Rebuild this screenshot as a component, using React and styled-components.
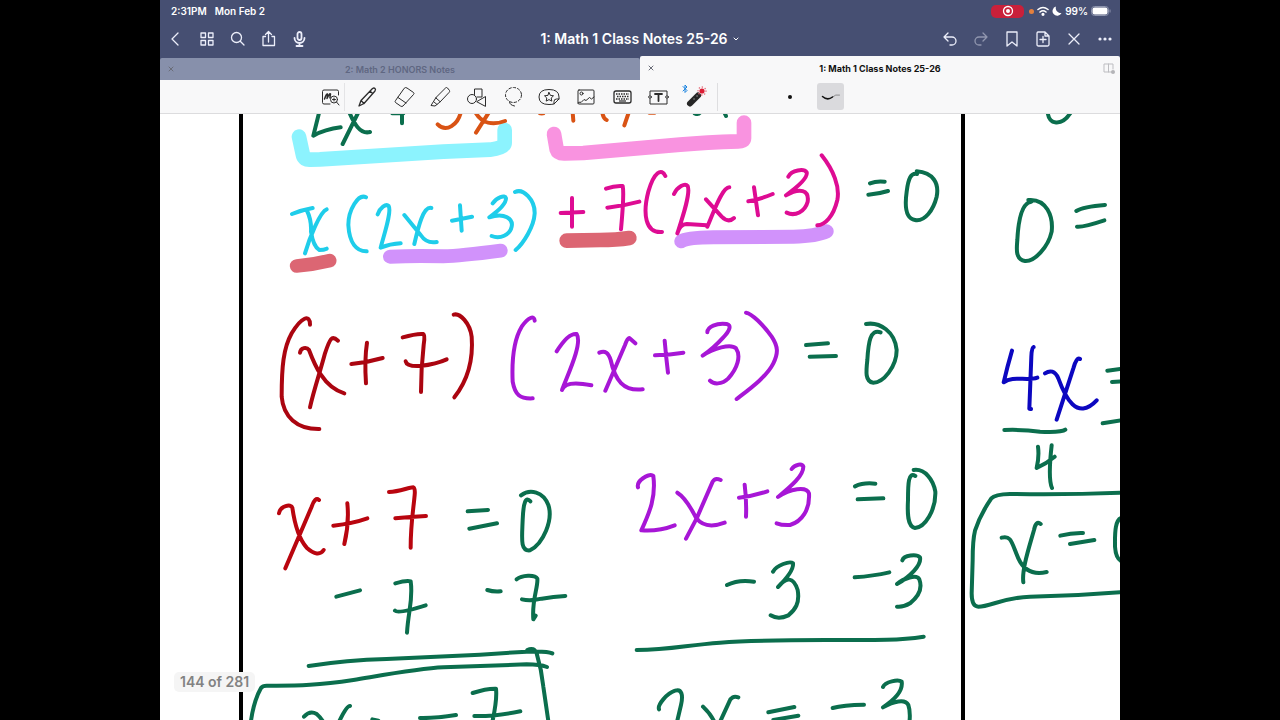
import React, { useState } from 'react'
import styled, { createGlobalStyle } from 'styled-components';

const GREEN = "#0b6e4d";
const ORANGE = "#d95314";
const CYAN = "#1fcdea";
const MAGENTA = "#de0c93";
const CRIMSON = "#ab0510";
const RED = "#b9050f";
const PURPLE = "#a716d6";
const BLUE = "#0c07c0";

// pen samples are stored at three units per point, relative to the block origin
const INK_SCALE = 1 / 3;
const PEN = 12;

const blocks = [
  {
    x: 230, y: 110,
    strokes: [
      { color: "#8cf3fe", width: 44, paths: ["M207 80L219 136Q222 150 240 149L270 148L640 125L780 119Q824 114 824 98V60"] },
      { color: "#dc6673", width: 41, paths: ["M200 468Q250 464 299 452"] },
      { color: "#d192fb", width: 42, paths: ["M480 440Q560 436 640 439Q690 438 812 422"] },
      { color: GREEN, paths: [
        "M268 5L250 77Q285 58 332 52",
        "M357 5C372 40 390 74 420 66M386 5L338 102",
        "M516 5V40M487 10H520",
      ] },
      { color: ORANGE, paths: [
        "M692 8C684 42 650 70 623 43",
        "M778 5L738 68M735 5C755 42 790 46 825 33",
        "M934 10H940",
      ] },
      { color: CYAN, paths: [
        "M186 312Q215 300 248 294M230 300Q245 330 243 365Q250 410 268 420Q282 420 290 416M290 298C270 305 238 385 225 430",
        "M408 262C385 250 355 300 355 345C358 400 380 425 410 424",
        "M443 313C450 293 468 280 476 288C486 305 460 380 452 413Q480 402 512 400",
        "M523 315L572 375Q590 402 620 396M604 294C580 288 565 350 553 402",
        "M666 332L726 320M690 286L695 362",
        "M788 280C800 262 825 253 828 265C828 285 795 310 778 322C825 306 850 328 845 350C840 375 810 388 785 378",
        "M855 246C880 234 915 270 914 310C912 350 880 400 857 420",
      ] },
    ],
  },
  {
    x: 540, y: 110,
    strokes: [
      { color: "#f993e0", width: 44, paths: ["M42 72L50 118Q54 131 75 130L130 129L420 104Q500 97 595 94Q612 94 612 85V38"] },
      { color: "#dc6673", width: 44, paths: ["M80 392L180 390Q230 390 268 384"] },
      { color: "#d192fb", width: 42, paths: ["M424 394Q440 383 520 382L760 380Q830 378 860 364"] },
      { color: ORANGE, paths: ["M98 8L100 32", "M187 8Q190 26 200 30", "M266 8L253 46", "M328 8H344", "M0 10H6"] },
      { color: GREEN, paths: [
        "M464 10Q475 15 480 8M552 5L558 18",
        "M990 220Q1010 212 1034 215M985 254Q1015 252 1044 243",
        "M1130 184C1180 188 1198 220 1190 260C1180 300 1155 335 1125 330C1095 325 1095 280 1100 245C1105 205 1113 188 1131 192",
      ] },
      { color: MAGENTA, paths: [
        "M62 309L130 306M96 264V350",
        "M198 236Q225 226 248 228Q253 250 243 358M202 293Q250 288 298 275",
        "M376 198C365 173 342 185 325 245C308 310 315 370 366 366",
        "M402 252C412 230 435 218 443 228C453 250 425 330 412 370Q420 342 440 342L500 346",
        "M498 268L545 320Q565 340 582 324M568 232C545 232 518 315 502 350",
        "M625 274Q660 268 698 252M642 232L654 316",
        "M745 200C755 180 792 175 800 187C805 205 760 240 738 256C780 232 808 240 803 275C795 305 765 320 740 308",
        "M845 136C880 180 900 230 892 270C880 320 855 345 832 346",
      ] },
    ],
  },
  {
    x: 270, y: 300,
    strokes: [
      { color: CRIMSON, paths: [
        "M120 74C120 42 95 50 65 100C40 145 35 200 35 290C40 350 80 388 148 387",
        "M90 158C92 142 110 140 117 150C132 190 160 262 223 280M204 122C185 105 180 115 165 160C152 210 130 275 120 322",
        "M244 192Q290 188 338 174M291 128Q283 180 288 250",
        "M398 112Q440 100 460 102Q466 105 461 135C456 180 453 220 453 276M407 184Q410 200 450 198Q500 192 530 178",
        "M551 44C570 38 600 70 605 110C611 190 590 245 553 292",
      ] },
    ],
  },
  {
    x: 500, y: 300,
    strokes: [
      { color: PURPLE, paths: [
        "M104 62C103 45 85 52 65 80C35 130 36 200 38 245C45 285 60 297 98 295",
        "M170 154Q205 98 230 102C248 130 205 220 186 270Q195 240 274 256",
        "M298 158C315 150 325 158 332 180C345 240 370 275 428 268M406 130L388 114Q382 115 375 135L316 272",
        "M465 166Q510 165 550 158M494 122Q498 170 504 218",
        "M622 97C622 80 650 68 680 72C695 75 690 92 670 112Q640 145 608 167C640 145 692 130 708 145C724 168 712 205 685 235C665 255 640 253 630 242",
        "M738 38C755 40 790 75 815 110C835 140 835 160 820 190C800 230 750 266 710 297",
      ] },
      { color: GREEN, paths: [
        "M918 135L984 130M929 170L1008 168",
        "M1098 72C1140 65 1185 95 1190 150C1190 200 1150 248 1120 248C1095 245 1098 215 1102 180C1105 130 1110 85 1142 97",
      ] },
    ],
  },
  {
    x: 160, y: 460,
    strokes: [
      { color: RED, paths: [
        "M357 160C360 138 394 130 397 143C405 200 420 240 440 263Q475 294 491 270M477 120Q465 110 455 140L376 325",
        "M520 197Q580 190 622 175M562 130Q568 190 553 252",
        "M687 96C720 95 745 82 760 82Q766 84 764 105C760 150 752 190 752 263M706 175Q750 170 798 168",
      ] },
      { color: GREEN, paths: [
        "M923 154L984 150M928 206L1011 190",
        "M1083 106C1110 85 1150 95 1165 135C1180 180 1150 250 1110 271C1080 274 1086 235 1088 180C1090 125 1098 108 1111 124",
        "M529 410L600 391",
        "M706 370Q740 360 752 364C760 420 745 450 741 518M705 452Q715 462 797 436",
        "M982 390Q1000 396 1022 394",
        "M1070 358C1085 345 1125 343 1132 356C1135 380 1115 420 1120 478L1127 467M1086 418Q1110 424 1145 416Q1180 410 1216 408",
        "M446 618Q560 600 680 597L960 584L1100 575Q1160 572 1177 580",
        "M272 790Q280 725 303 684Q308 677 320 677C420 678 480 675 580 660C700 640 780 625 850 622Q1000 617 1100 613Q1140 613 1161 621",
        "M1102 570Q1122 560 1130 580Q1145 630 1150 680L1166 790",
        "M432 770Q450 750 470 762Q485 775 495 795M570 738Q560 735 535 790",
        "M637 778L655 782",
        "M780 774Q830 775 888 765",
        "M938 699Q980 685 1008 686Q1012 720 995 795M943 768Q1000 770 1081 754",
      ] },
    ],
  },
  {
    x: 620, y: 450,
    strokes: [
      { color: PURPLE, paths: [
        "M54 112Q50 98 70 84Q92 70 100 78C108 140 90 185 64 241Q115 245 164 226",
        "M172 128C200 145 215 180 228 203Q255 240 314 218M302 90Q285 82 278 95L230 205L198 266",
        "M357 143Q400 138 442 124M374 104Q380 150 378 200",
        "M515 57C525 42 547 40 550 50C550 80 505 115 474 141C510 115 560 108 567 130C570 180 545 215 510 225Q485 226 470 220",
      ] },
      { color: GREEN, paths: [
        "M705 109Q730 97 766 101M713 148L790 145",
        "M881 60C915 55 940 90 946 125C948 180 915 232 885 234C862 230 862 190 864 150C864 100 865 65 886 78",
        "M321 405Q355 388 402 395",
        "M459 365C470 345 510 332 519 340C522 360 495 390 474 411C500 380 520 380 533 420C540 460 525 480 505 496Q475 510 452 496",
        "M704 382Q760 378 808 367",
        "M847 331C852 315 890 312 900 322C905 345 870 380 831 402C850 385 890 372 898 388C908 415 895 440 870 460Q850 472 831 470",
        "M50 600C150 600 200 585 300 578C450 567 600 572 800 569Q860 568 911 560",
        "M117 778C112 765 140 730 165 722C185 715 190 735 183 765L170 820",
        "M249 770Q275 795 285 820M355 742Q335 735 328 755L298 820",
        "M445 787L523 771M460 810L535 797",
        "M638 774Q670 765 732 764",
        "M789 711C795 695 835 687 845 695C850 725 815 755 789 772C820 755 855 745 865 765Q872 785 868 820",
      ] },
    ],
  },
  {
    x: 950, y: 110,
    strokes: [
      { color: GREEN, paths: [
        "M293 5C295 45 335 50 362 8",
        "M235 270C290 265 310 320 305 365C295 410 255 455 225 453C195 448 200 415 202 390C205 330 215 278 244 275",
        "M379 303Q400 290 465 285M381 350Q400 352 463 331",
        "M472 782L520 776M486 816L520 814M458 940L520 930",
        "M163 960Q220 958 270 965Q335 968 346 959",
        "M264 1010Q268 1040 260 1074Q290 1060 314 1040M305 1006C300 1050 295 1110 306 1134",
        "M520 1148Q350 1155 180 1152Q135 1153 124 1165Q90 1215 75 1262Q68 1290 68 1350L65 1450Q65 1490 85 1490C120 1490 160 1463 240 1460Q380 1458 520 1446",
        "M155 1283C185 1275 185 1300 205 1345Q230 1400 290 1386M272 1242Q258 1230 252 1260C235 1320 215 1380 220 1417",
        "M331 1277Q365 1268 399 1269M360 1302L433 1290",
        "M520 1223C492 1222 495 1280 495 1310Q498 1352 520 1355",
      ] },
      { color: BLUE, paths: [
        "M186 722Q172 770 161 817C190 795 230 815 262 803M251 711Q245 712 244 740L238 896L243 897",
        "M285 790C300 780 315 782 325 805C345 860 380 935 440 871M390 747Q380 740 370 775L320 929",
      ] },
    ],
  },
]

const leftActions = [
  { label: "Back", d: "M13 5L7 11L13 17" },
  { label: "Thumbnails", d: "M5 5h4.500v4.500H5zM12.500 5H17v4.500h-4.500zM5 12.500h4.500V17H5zM12.500 12.500H17V17h-4.500z" },
  { label: "Search", d: "M14.500 9.500a5 5 0 1 1-10 0a5 5 0 0 1 10 0M13 13l4 4" },
  { label: "Share", d: "M7.500 8.500H5v9h11.500v-9H14M10.500 14V3.500M7.500 6.500l3-3l3 3" },
  { label: "Record audio", d: "M10.500 4a2 2 0 0 1 2 2v4a2 2 0 0 1-4 0V6a2 2 0 0 1 2-2zM5.500 10a5 5 0 0 0 10 0M10.500 15v3M7.500 18h6", width: 1.8 },
]

const rightActions = [
  { label: "Undo", d: "M9 5L5 9l4 4M5 9h8a4 4 0 0 1 0 8h-2" },
  { label: "Redo", d: "M13 5l4 4l-4 4M17 9H9a4 4 0 0 0 0 8h2", dim: true },
  { label: "Bookmark", d: "M6 4h10v14l-5-4l-5 4z" },
  { label: "Add page", d: "M6 4h7l4 4v8.500q0 1.500-1.500 1.500h-9Q5 18 5 16.500v-11Q5 4 6 4zM13 4v4h4M11 8.500v6M8 11.500h6" },
  { label: "Close editing", d: "M6 6l10 10M16 6L6 16" },
]

const penTools = [
  { label: "Pen", art: <path d="M3 20l2-5.500L16.500 2.500q1.500-1 2.500 0t0 2.500L8 17.500zM5 14.500l3 3M14 5l2.500 2.500" strokeWidth="1.300" /> },
  { label: "Eraser", art: <path d="M11.500 2Q12.500 1 14 2l6.500 4.500q1 1 0 2L10 20q-1 1-2.500 0l-5-3.500q-1-1 0-2zM5 11.500l8 5.500" /> },
  { label: "Highlighter", art: <path d="M7 11.500L16.500 2q1-1 2 0l2 2.500q.5 1-.5 2l-8.500 9zM7 11.500l-2.500 4L8 18.500l3.500-3M4.500 15.500l-2.500 4l4 .5l2-1.500" /> },
  { label: "Shapes", art: <><path d="M9.500 8.500V3h7.500v8h-5" /><circle cx="7" cy="13" r="4.500" /><path d="M12 15.500l8.500-5V20z" /></> },
  { label: "Lasso", art: <><ellipse cx="11.500" cy="9" rx="8" ry="7.500" strokeDasharray="2.500 2" /><path d="M7.500 16q0 3 5 4" /></> },
  { label: "Elements", art: <><path d="M16 18q-2 .5-5 .5q-10 0-10-7.500t10-7.500t10 7.500v2l-5 5v-2.500q0-2.500 2.500-2.500h2.500" /><path d="M11 6.500l1.400 2.900l3.100.4l-2.300 2.200l.6 3.100l-2.800-1.500l-2.800 1.500l.6-3.100l-2.300-2.200l3.100-.4z" /></> },
  { label: "Image", art: <><rect x="3" y="4" width="16" height="14" rx="1" /><circle cx="6.500" cy="7.500" r="1.500" /><path d="M3 17l2-1l1 .5l3-3l2 1l3.500-3l2 1.500l2.500-2" /></> },
  { label: "Keyboard", art: <g strokeLinecap="butt"><rect x="3" y="5" width="17" height="12" rx="2" strokeWidth="1.300" /><path d="M5 8h13M6 10.500h12M5 13h13" strokeWidth="1.500" strokeDasharray="1.500 1" /><path d="M8 15h7" strokeWidth="1.200" /></g> },
  { label: "Text box", art: <><path d="M3 9V5h17v4M3 13v5h17v-5" /><circle cx="3" cy="11" r="1.300" /><circle cx="20" cy="11" r="1.300" /><path d="M8 8h7M11.500 8v7" strokeWidth="1.800" /></> },
]

const Glyph = ({ size = 22, children, ...rest }) => (
  <svg width={size} height={size} viewBox={`0 0 ${size} ${size}`} fill="none" stroke="currentColor"
    strokeLinecap="round" strokeLinejoin="round" aria-hidden="true" {...rest}>
    {children}
  </svg>
)

function StatusBar() {
  return (
    <Status>
      <StatusGroup>
        <span>2:31PM</span>
        <span>Mon Feb 2</span>
      </StatusGroup>
      <StatusIcons>
        <RecordPill aria-label="Screen recording">
          <Glyph size={12}>
            <circle cx="6" cy="6" r="4.500" strokeWidth="1.300" />
            <circle cx="6" cy="6" r="2" fill="currentColor" stroke="none" />
          </Glyph>
        </RecordPill>
        <MicDot />
        <Glyph size={12} strokeWidth="1.600">
          <path d="M1 4.500q5-4 10 0M3 7q3-2.500 6 0" />
          <circle cx="6" cy="9.300" r=".8" fill="currentColor" />
        </Glyph>
        <Glyph size={10}>
          <path d="M4 .5a4.700 4.700 0 1 0 5.500 6.500A5 5 0 0 1 4 .5z" fill="currentColor" stroke="none" />
        </Glyph>
        <span>99%</span>
        <svg width="20" height="10" viewBox="0 0 20 10" aria-hidden="true">
          <rect x=".5" y=".5" width="17" height="9" rx="3" fill="none" stroke="#8d94ad" />
          <rect x="1.500" y="1.500" width="15" height="7" rx="2" fill="#fff" />
          <path d="M19 3.500v3" stroke="#8d94ad" />
        </svg>
      </StatusIcons>
    </Status>
  )
}

function NavBar() {
  return (
    <Nav>
      <NavGroup>
        {leftActions.map((item) => (
          <NavButton key={item.label} aria-label={item.label}>
            <Glyph strokeWidth={item.width || 1.3}><path d={item.d} /></Glyph>
          </NavButton>
        ))}
      </NavGroup>
      <Title>
        1: Math 1 Class Notes 25-26
        <Glyph size={8}><path d="M2 3l2 2l2-2" /></Glyph>
      </Title>
      <NavGroup $end>
        {rightActions.map((item) => (
          <NavButton key={item.label} aria-label={item.label} $dim={item.dim}>
            <Glyph strokeWidth="1.300"><path d={item.d} /></Glyph>
          </NavButton>
        ))}
        <NavButton aria-label="More">
          <Glyph fill="currentColor" stroke="none">
            <circle cx="6" cy="11" r="1.600" /><circle cx="11" cy="11" r="1.600" /><circle cx="16" cy="11" r="1.600" />
          </Glyph>
        </NavButton>
      </NavGroup>
    </Nav>
  )
}

function Tabs() {
  const [active, setActive] = useState(1);
  const tabs = ["2: Math 2 HONORS Notes", "1: Math 1 Class Notes 25-26"]

  return (
    <TabStrip>
      {tabs.map((name, index) => (
        <Tab key={name} $active={active === index}>
          <TabIcon aria-label={`Close ${name}`}>
            <Glyph size={8}><path d="M2 2l4 4M6 2l-4 4" /></Glyph>
          </TabIcon>
          <TabName onClick={() => setActive(index)}>{name}</TabName>
          {index === 1 ? (
            <TabIcon aria-label="Split view">
              <Glyph size={14} stroke="#bdbdc1">
                <path d="M10 11H2V3h9v5M6.500 3v8" />
                <circle cx="11" cy="11" r="2" fill="#b4b4b8" stroke="none" />
              </Glyph>
            </TabIcon>
          ) : <TabSpacer />}
        </Tab>
      ))}
    </TabStrip>
  )
}

function Tools() {
  return (
    <ToolBar>
      <ZoomTool aria-label="Zoom window">
        <Glyph>
          <path d="M11 18H5q-1.500 0-1.500-1.500v-11Q3.500 4 5 4h13q1.500 0 1.500 1.500V9" />
          <path d="M5.500 13q2-5.500 3-5q.5.500-.5 4.500q3-6 3.500-4.500q-.5 2-.5 4" strokeWidth="1.500" />
          <circle cx="15" cy="13.500" r="3.500" />
          <path d="M13.500 13.500h3M15 12v3M17.500 16l2.500 3" />
        </Glyph>
      </ZoomTool>
      <ToolGrid>
        {penTools.map((tool) => (
          <ToolButton key={tool.label} aria-label={tool.label}>
            <Glyph>{tool.art}</Glyph>
          </ToolButton>
        ))}
        <ToolButton aria-label="Laser pointer">
          <Glyph size={28}>
            <path d="M2 3.500l4 4l-2 2V2l2 2l-4 4" stroke="#1c84e0" />
            <path d="M9 20.500l8-8" stroke="#262626" strokeWidth="6" />
            <path d="M16 13h.1M13 16h.1" stroke="#8d8d8d" strokeWidth="1.500" />
            <circle cx="21" cy="8" r="2.600" fill="#dc1c34" stroke="none" />
            <circle cx="21" cy="8" r="4" stroke="#e5606f" strokeWidth="1.300" strokeDasharray=".3 2.800" />
          </Glyph>
        </ToolButton>
      </ToolGrid>
      <PenStyles>
        <PenStyle aria-label="Dot stroke">
          <Glyph><circle cx="11" cy="11" r="2" fill="currentColor" stroke="none" /></Glyph>
        </PenStyle>
        <PenStyle aria-label="Brush stroke" $selected>
          <Glyph>
            <path d="M12.500 11q3-3 7-2" stroke="#8b8b8d" />
            <path d="M2.500 10.500q5 4.500 10 .5" strokeWidth="1.500" />
          </Glyph>
        </PenStyle>
      </PenStyles>
    </ToolBar>
  )
}

function Notebook() {
  return (
    <Paper>
      <Ink viewBox="160 114 960 606" role="img" aria-label="Handwritten factoring notes">
        <path d="M241 110V720M963 110V720" stroke="#000" strokeWidth="4" />
        {blocks.map((block, index) => (
          <g key={index} transform={`translate(${block.x} ${block.y}) scale(${INK_SCALE})`}>
            {block.strokes.map((stroke, i) => (
              <path key={i} d={stroke.paths.join("")} stroke={stroke.color} strokeWidth={stroke.width || PEN} />
            ))}
          </g>
        ))}
      </Ink>
      <PageBadge>144 of 281</PageBadge>
    </Paper>
  )
}

function App() {
  return (
    <Stage>
      <GlobalStyle />
      <Tablet>
        <StatusBar />
        <NavBar />
        <Tabs />
        <Tools />
        <Notebook />
      </Tablet>
    </Stage>
  )
}

export default App

const GlobalStyle = createGlobalStyle`
  *{
    box-sizing:border-box;
  }
  body{
    margin:0;
    background:#000;
    font-family:Inter, "Liberation Sans", sans-serif;
  }
  button{
    margin:0;
    padding:0;
    border:0;
    background:none;
    color:inherit;
    font:inherit;
    cursor:pointer;
  }
  svg{
    display:block;
    flex-shrink:0;
  }
`;

const Stage = styled.div`
  display:flex;
  justify-content:center;
  min-height:100vh;
  background:#000;
`;

const Tablet = styled.div`
  display:flex;
  flex-direction:column;
  width:75%;
  background:#464f72;
`;

const Status = styled.div`
  display:flex;
  align-items:center;
  justify-content:space-between;
  height:22px;
  padding:0 9px 0 11px;
  color:#fff;
  font-size:10px;
  font-weight:600;
`;

const StatusGroup = styled.div`
  display:flex;
  gap:8px;
`;

const StatusIcons = styled.div`
  display:flex;
  align-items:center;
  gap:3px;
`;

const RecordPill = styled.button`
  display:flex;
  align-items:center;
  justify-content:center;
  width:33px;
  height:13px;
  margin-right:2px;
  border-radius:5px;
  background:#c9203a;
`;

const MicDot = styled.span`
  width:5px;
  height:5px;
  border-radius:50%;
  background:#e5803d;
`;

const Nav = styled.nav`
  display:flex;
  align-items:center;
  height:34px;
  color:#eceefa;
`;

const NavGroup = styled.div`
  display:flex;
  flex:1;
  justify-content:${props => props.$end ? `flex-end` : `flex-start`};
`;

const NavButton = styled.button`
  display:flex;
  align-items:center;
  justify-content:center;
  width:31px;
  height:34px;
  opacity:${props => props.$dim ? 0.45 : 1};
`;

const Title = styled.button`
  display:flex;
  align-items:center;
  gap:4px;
  color:#fff;
  font-size:14px;
  font-weight:600;
  line-height:16px;
  white-space:nowrap;
`;

const TabStrip = styled.div`
  display:flex;
  align-items:flex-end;
  height:24px;
`;

const Tab = styled.div`
  display:flex;
  flex:1;
  align-items:center;
  height:${props => props.$active ? `24px` : `22px`};
  border-radius:2px 2px 0 0;
  background:${props => props.$active ? `#f8f8f9` : `#8790ab`};
  color:${props => props.$active ? `#111` : `#5f6782`};
  font-size:9px;
  font-weight:${props => props.$active ? 700 : 600};
`;

const TabIcon = styled.button`
  display:flex;
  align-items:center;
  justify-content:center;
  width:22px;
  height:22px;
  color:#6a6d78;
`;

const TabSpacer = styled.span`
  width:22px;
`;

const TabName = styled.button`
  flex:1;
  height:100%;
`;

const ToolBar = styled.div`
  display:flex;
  align-items:center;
  height:34px;
  padding-left:155px;
  border-bottom:1px solid #dcdcde;
  background:#f8f8f9;
  color:#2b2b2b;
`;

const ToolButton = styled.button`
  display:flex;
  align-items:center;
  justify-content:center;
  height:28px;
`;

const ZoomTool = styled(ToolButton)`
  width:30px;
  border-right:1px solid #e4e4e6;
`;

const ToolGrid = styled.div`
  display:grid;
  grid-template-columns:repeat(10, 1fr);
  width:373px;
  padding:0 4px;
  border-right:1px solid #dedee0;
`;

const PenStyles = styled.div`
  display:flex;
  gap:14px;
  padding-left:58px;
`;

const PenStyle = styled(ToolButton)`
  width:27px;
  height:27px;
  border-radius:3px;
  background:${props => props.$selected ? `#dadadd` : `transparent`};
  color:#111;
`;

const Paper = styled.main`
  position:relative;
  flex:1;
  overflow:hidden;
  background:#fff;
`;

const Ink = styled.svg`
  width:100%;
  height:auto;
  fill:none;
  stroke-linecap:round;
  stroke-linejoin:round;
`;

const PageBadge = styled.span`
  position:absolute;
  left:14px;
  bottom:28px;
  padding:2px 6px;
  border-radius:5px;
  background:#f5f5f5;
  color:#828282;
  font-size:14px;
  line-height:16px;
  font-weight:600;
`;
